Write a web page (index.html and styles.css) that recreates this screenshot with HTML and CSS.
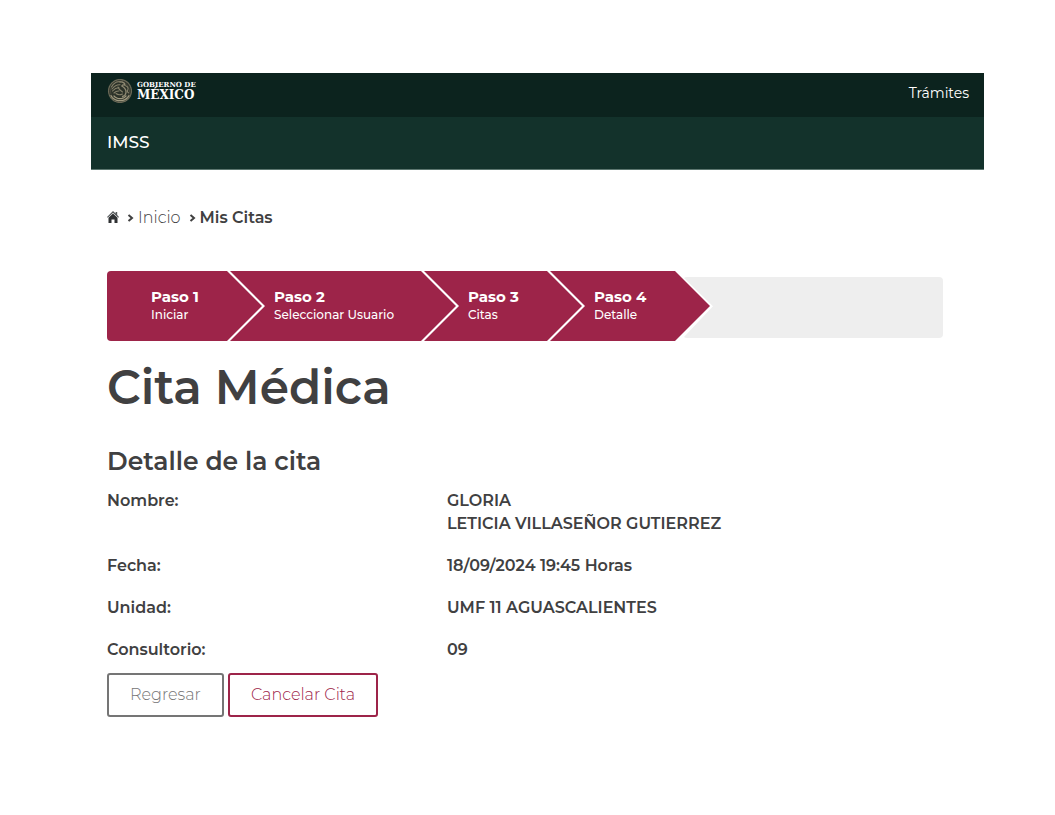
FILE: index.html
```html
<!DOCTYPE html>
<html lang="es-MX">
<head>
  <meta charset="UTF-8">
  <meta name="viewport" content="width=device-width, initial-scale=1.0">
  <title>IMSS - Cita Médica</title>
  <link rel="stylesheet" href="styles.css">
</head>
<body>

  <header>
    <div class="gob-bar">
      <a class="logo" href="#">
        <svg class="escudo" viewBox="0 0 26 26" fill="none" stroke="#85806a" stroke-linecap="round">
          <circle cx="13" cy="13" r="11.4" fill="#2c3229" stroke="#6b6957" stroke-width="1.3" stroke-dasharray="1.6 .7"/>
          <circle cx="13" cy="13" r="9.6" stroke="#504f40" stroke-width=".7"/>
          <path d="M4.500 9c2-3.500 5-5.500 8-5.200M5 11c2.500-3 5-4.500 8-4.200M5.500 13c2-2.200 4-3.300 6.500-3.200M7 15c1.500-1.500 3-2.200 5-2" stroke-width="1.1"/>
          <path d="M13 4c2.500-.3 4.500 1 5 3.200-1.500-.6-2.600-.3-3.200.8 2.800 1.600 4.500 3.700 4.200 6.500-.3 2-1.500 3.500-3.500 4" stroke="#8f8a73" stroke-width="1.300"/>
          <path d="M11 9c1 3 2.500 4 4.500 5M9 15.500c2 1.700 4 1.700 6.500.5M19 8c2 .8 2.600 2.400 1.700 4-.7 1.300-.1 2.300.8 2.800" stroke-width="1.100"/>
          <path d="M4 17.500c1.500 3.300 5 5.200 9 5.200s7.500-2 9-5.200M7 18c2 2 4 2.700 6 2.700s4-.7 6-2.700" stroke="#a09a80" stroke-width="1.200" stroke-dasharray="1.800 .6"/>
        </svg>
        <span class="logo-text">
          <span class="gobierno">GOBIERNO DE</span>
          <span class="mexico">MÉXICO</span>
        </span>
      </a>
      <a class="tramites" href="#">Trámites</a>
    </div>
    <nav class="imss-bar">
      <a href="#">IMSS</a>
    </nav>
  </header>

  <main>
    <nav class="breadcrumb">
      <a href="#" aria-label="Portada">
        <svg class="home" viewBox="0 0 12 12" fill="#2f3133">
          <path d="M6 0 8.600 2.500V1h1.600v3.100L12 6l-.8.800L6 1.800.8 6.800 0 6z" fill="#55585a"/>
          <path d="M6 2.500 10.500 6.800V12h-3V8.500h-3V12h-3V6.800z"/>
        </svg>
      </a>
      <svg class="chevron" viewBox="0 0 7 8"><path d="M1.500 1 5 4 1.500 7"/></svg>
      <a class="inicio" href="#">Inicio</a>
      <svg class="chevron" viewBox="0 0 7 8"><path d="M1.500 1 5 4 1.500 7"/></svg>
      <strong>Mis Citas</strong>
    </nav>

    <ol class="pasos">
      <li class="paso"><strong>Paso 1</strong><span>Iniciar</span></li>
      <li class="paso"><strong>Paso 2</strong><span>Seleccionar Usuario</span></li>
      <li class="paso"><strong>Paso 3</strong><span>Citas</span></li>
      <li class="paso"><strong>Paso 4</strong><span>Detalle</span></li>
      <li class="resto" aria-hidden="true"></li>
    </ol>

    <h1>Cita Médica</h1>
    <h2>Detalle de la cita</h2>

    <dl class="detalle">
      <dt>Nombre:</dt>
      <dd>GLORIA<br>LETICIA VILLASEÑOR GUTIERREZ</dd>
      <dt>Fecha:</dt>
      <dd>18/09/2024 19:45 Horas</dd>
      <dt>Unidad:</dt>
      <dd>UMF 11 AGUASCALIENTES</dd>
      <dt>Consultorio:</dt>
      <dd>09</dd>
    </dl>

    <div class="botones">
      <button type="button" class="btn">Regresar</button>
      <button type="button" class="btn btn-cancelar">Cancelar Cita</button>
    </div>
  </main>

</body>
</html>
```
FILE: styles.css
```css
* { box-sizing: border-box; margin: 0; padding: 0; }
body {
  background-color: #fff;
  color: #404041;
  font-family: Montserrat, Inter, sans-serif;
  font-size: 16px;
  padding: 73px 71px 40px 91px;
}
a { color: inherit; text-decoration: none; }

/* header */
.gob-bar {
  display: flex; align-items: center; justify-content: space-between;
  height: 44px; padding: 0 15px 0 16px;
  background-color: #0c231e; color: #fff;
}
.logo { display: flex; align-items: center; gap: 4px; padding-bottom: 8px; }
.escudo { width: 26px; height: 26px; }
.logo-text {
  display: flex; flex-direction: column;
  font-family: "DejaVu Serif", serif; font-weight: bold;
}
.gobierno { font-size: 7px; line-height: 9px; }
.mexico { font-size: 12px; line-height: 13px; }
.tramites { font-size: 14px; padding-bottom: 4px; }
.imss-bar {
  display: flex; align-items: center;
  height: 53px; padding: 0 16px 2px;
  background-color: #13322b; color: #fff;
  border-bottom: 1px solid #5d7770;
  font-size: 17px; font-weight: 500;
}

main { padding: 35px 41px 0 16px; }

.breadcrumb { display: flex; align-items: center; height: 24px; gap: 4px; }
.breadcrumb strong { font-weight: 600; }
.home { display: block; width: 12px; height: 12px; }
.chevron {
  width: 7px; height: 8px; margin: 2px 0 0 4px;
  fill: none; stroke: #404041; stroke-width: 2;
}
.inicio { font-weight: 300; }

/* pasos */
.pasos {
  display: grid; grid-template-columns: 123px 194px 126px 128px 1fr;
  height: 70px; margin-top: 42px;
  list-style: none;
}
.paso {
  display: flex; flex-direction: column; justify-content: center;
  margin-right: -32px; padding: 0 0 2px 44px;
  background-color: #9d2449; color: #fff;
  clip-path: polygon(0 0, calc(100% - 35px) 0, 100% 50%, calc(100% - 35px) 100%, 0 100%, 35px 50%);
}
.paso:first-child {
  border-radius: 4px 0 0 4px;
  clip-path: polygon(0 0, calc(100% - 35px) 0, 100% 50%, calc(100% - 35px) 100%, 0 100%);
}
.paso strong { font-size: 15px; font-weight: 700; line-height: 20px; }
.paso span { font-size: 12px; font-weight: 500; line-height: 16px; }
.resto {
  height: 61px; margin: 6px 0 0 5px;
  background-color: #eee; border-radius: 4px;
  clip-path: polygon(0 0, 100% 0, 100% 100%, 0 100%, 30px 48%);
}

h1 { margin-top: 17px; font-size: 47px; line-height: 60px; font-weight: 600; }
h2 { margin-top: 27px; font-size: 25px; line-height: 32px; font-weight: 600; }

.detalle {
  display: grid; grid-template-columns: 340px 1fr; row-gap: 19px;
  margin-top: 12px;
  line-height: 23px; font-weight: 600;
}

.botones { display: flex; gap: 4px; margin-top: 12px; }
.btn {
  height: 44px; padding: 0 21px 2px;
  background-color: #fff; border: 2px solid #757575; border-radius: 3px;
  color: #757575; font-family: inherit; font-size: 16px; font-weight: 300;
  cursor: pointer;
}
.btn-cancelar { border-color: #9d2449; color: #9d2449; }
```
